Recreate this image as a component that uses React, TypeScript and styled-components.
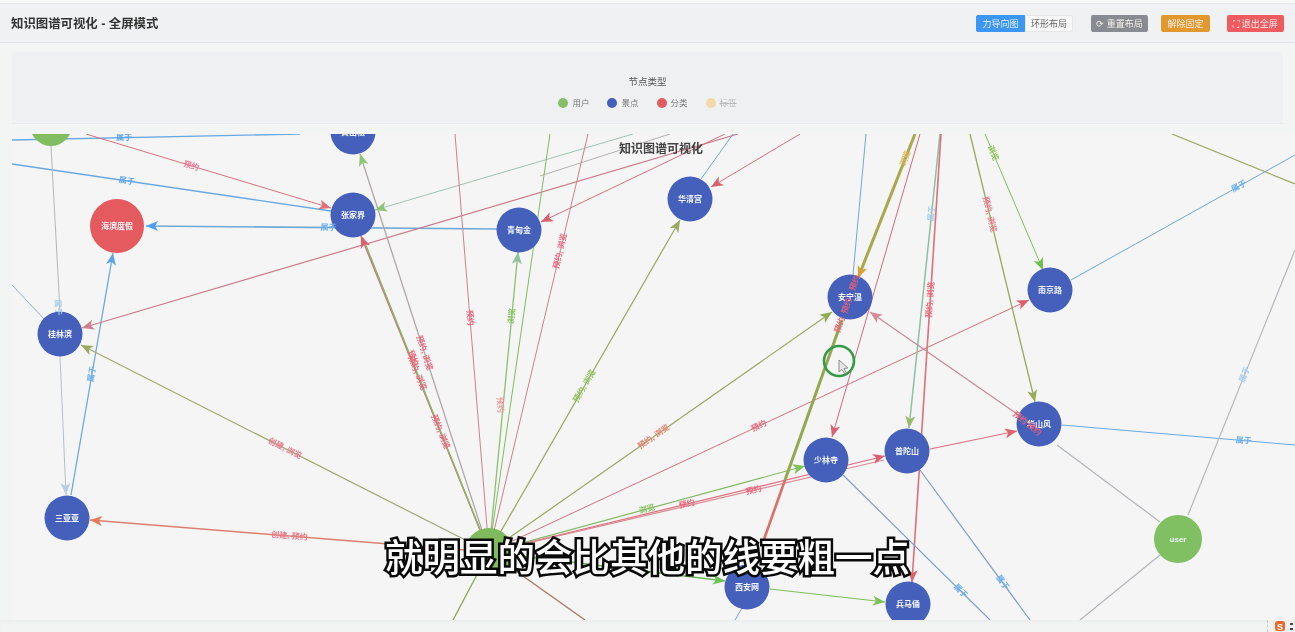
import styled, { createGlobalStyle } from 'styled-components'

const GlobalStyle = createGlobalStyle`
  html, body { margin: 0; padding: 0; background: #f4f5f5; }
  body { font-family: "Liberation Sans", "Noto Sans CJK SC", sans-serif; }
`

const Page = styled.div`
  position: relative;
  width: 100%;
  height: 632px;
  display: flex;
  flex-direction: column;
  overflow: hidden;
  background: #f4f5f5;
`

const Blurred = styled.div`
  display: flex;
  flex-direction: column;
  flex: 1;
  min-height: 0;
  filter: blur(0.5px);
`

const TopStrip = styled.div`
  height: 4px;
  background: #f7f8f8;
  border-bottom: 1px solid #e9eaeb;
  box-sizing: border-box;
`

const Header = styled.header`
  height: 39px;
  box-sizing: border-box;
  display: flex;
  align-items: center;
  padding: 0 11px;
  background: #f0f1f2;
  border-bottom: 1px solid #e4e5e6;
`

const Title = styled.h1`
  flex: 1;
  margin: 0;
  font-size: 12.4px;
  font-weight: 700;
  color: #333;
`

const Toolbar = styled.div`
  display: flex;
  align-items: center;
`

const SegmentGroup = styled.div`
  display: flex;
  margin-right: 18px;
`

const Segment = styled.div<{ $active?: boolean }>`
  width: ${p => (p.$active ? '49px' : '48px')};
  height: 17px;
  box-sizing: border-box;
  display: flex;
  align-items: center;
  justify-content: center;
  font-size: 9px;
  color: ${p => (p.$active ? '#e8f3ff' : '#666')};
  background: ${p => (p.$active ? '#3c96f3' : '#f8f8f8')};
  border: 1px solid ${p => (p.$active ? '#3c96f3' : '#e6e7e8')};
  border-radius: ${p => (p.$active ? '2px 0 0 2px' : '0 2px 2px 0')};
`

const ActionButton = styled.div<{ $color: string; $width: number; $gap: number }>`
  width: ${p => p.$width}px;
  height: 17px;
  margin-right: ${p => p.$gap}px;
  display: flex;
  align-items: center;
  justify-content: center;
  gap: 2px;
  font-size: 9px;
  color: #f4f0ea;
  background: ${p => p.$color};
  border-radius: 2px;
`

const Main = styled.main`
  flex: 1;
  min-height: 0;
  display: flex;
  flex-direction: column;
  gap: 10px;
  padding: 9px 0 0 12px;
  background: #f3f4f4;
`

const LegendCard = styled.section`
  height: 72px;
  box-sizing: border-box;
  margin-right: 12px;
  padding-top: 24px;
  display: flex;
  flex-direction: column;
  align-items: center;
  gap: 9px;
  background: #eff0f1;
  border-bottom: 1px solid #e8e9ea;
  border-radius: 3px 3px 0 0;
`

const LegendTitle = styled.div`
  font-size: 9.5px;
  line-height: 12px;
  color: #555;
`

const LegendRow = styled.div`
  display: flex;
  gap: 18px;
`

const LegendItem = styled.div<{ $off?: boolean }>`
  display: flex;
  align-items: center;
  gap: 4px;
  font-size: 8.5px;
  line-height: 12px;
  color: ${p => (p.$off ? '#bbb' : '#777')};
  text-decoration: ${p => (p.$off ? 'line-through' : 'none')};
`

const Dot = styled.span<{ $color: string }>`
  width: 10px;
  height: 10px;
  border-radius: 50%;
  background: ${p => p.$color};
`

const GraphSvg = styled.svg`
  display: block;
  width: 1283px;
  height: 486px;
  background: #f5f5f5;
`

const Footer = styled.footer`
  height: 12px;
  display: flex;
  align-items: center;
  justify-content: flex-end;
  gap: 4px;
  padding-right: 1px;
  background: #f2f3f3;
  box-shadow: inset 0 2px 2px #ebecec;
`

const TrayDivider = styled.span`
  height: 12px;
  margin-right: 2px;
  border-left: 1px dashed #ccc;
`

const Subtitle = styled.div`
  position: absolute;
  left: 0;
  right: 0;
  top: 532px;
  text-align: center;
  font-family: "Noto Sans CJK SC", sans-serif;
  font-size: 37.5px;
  font-weight: 500;
  line-height: 46px;
  color: #fff;
  -webkit-text-stroke: 5px #0a0a0a;
  paint-order: stroke fill;
  filter: blur(0.4px);
`

type Edge = {
  x1: number
  y1: number
  x2: number
  y2: number
  color: string
  width?: number
  arrow?: string
  label?: string
  labelColor?: string
  at?: number
}

type FreeLabel = { x: number; y: number; angle: number; text: string; color: string }

const BLUE = '#6aa9e0'
const RED = '#d9707f'
const GREEN = '#7fbd5f'
const OLIVE = '#9aa860'
const GREY = '#b3b6bb'
const HUB = { x: 489, y: 552 }

const hubEdge = (x2: number, y2: number, color: string, extra: Partial<Edge> = {}): Edge => ({
  x1: HUB.x,
  y1: HUB.y,
  x2,
  y2,
  color,
  ...extra
})

const edges: Edge[] = [
  { x1: 12, y1: 140, x2: 300, y2: 134, color: BLUE, width: 1.3, label: '属于', at: 0.39, labelColor: '#5ea6ea' },
  { x1: 12, y1: 164, x2: 331, y2: 211, color: BLUE, width: 1.3, label: '属于', at: 0.36, labelColor: '#5ea6ea' },
  { x1: 86, y1: 134, x2: 331, y2: 208, color: RED, arrow: '#e0707a', label: '预约', at: 0.43, labelColor: '#ec7a92' },
  { x1: 497, y1: 229, x2: 146, y2: 226, color: '#6fa9d6', width: 1.6, arrow: '#4d9ef0', label: '属于', at: 0.48, labelColor: '#6aaeea' },
  { x1: 51, y1: 146, x2: 60, y2: 312, color: GREY },
  { x1: 12, y1: 285, x2: 45, y2: 320, color: '#8fb2de' },
  { x1: 60, y1: 356, x2: 66, y2: 495, color: '#b4c0cc', arrow: '#b7cfe6', label: '属于', at: -0.35, labelColor: '#a8cdf0' },
  { x1: 71, y1: 495, x2: 113, y2: 253, color: BLUE, width: 1.3, arrow: '#5ba5e6', label: '属于', at: 0.5, labelColor: '#6aaeea' },
  { x1: 738, y1: 134, x2: 82, y2: 328, color: '#cc7a8c', width: 1.2, arrow: '#cf7f8f' },
  { x1: 633, y1: 134, x2: 375, y2: 210, color: '#9fc4b0', arrow: '#8fc474' },
  { x1: 670, y1: 134, x2: 540, y2: 176, color: '#b8b0b0' },
  { x1: 725, y1: 134, x2: 541, y2: 222, color: RED, arrow: '#d9606e' },
  { x1: 800, y1: 134, x2: 711, y2: 187, color: RED, arrow: '#d9606e' },
  { x1: 733, y1: 134, x2: 701, y2: 179, color: BLUE },
  hubEdge(361, 236, RED, { width: 1.6, arrow: '#d9606e', label: '预约, 浏览', at: 0.38, labelColor: '#e8687c' }),
  hubEdge(363, 238, GREEN, { width: 1.3, label: '预约, 浏览', at: 0.57, labelColor: '#e8687c' }),
  hubEdge(360, 154, '#b0a8a8', { width: 1.3, arrow: '#8fc474', label: '预约, 浏览', at: 0.5, labelColor: '#e8687c' }),
  hubEdge(455, 134, '#cf7f8c', { label: '预约', at: 0.56, labelColor: '#e8687c' }),
  hubEdge(550, 134, GREEN),
  hubEdge(588, 134, '#cf7f8c', { label: '预约, 浏览', at: 0.72, labelColor: '#e8687c' }),
  hubEdge(518, 252, '#8cbf72', { width: 1.3, arrow: '#8fc1a0', label: '浏览', at: 0.787, labelColor: '#86c25c' }),
  hubEdge(680, 220, OLIVE, { width: 1.2, arrow: '#9aa860', label: '预约, 浏览', at: 0.5, labelColor: '#90c05c' }),
  hubEdge(832, 312, OLIVE, { width: 1.2, arrow: '#8fae50', label: '预约, 浏览', at: 0.48, labelColor: '#e2806c' }),
  hubEdge(1029, 300, '#d9707f', { arrow: '#dc5f6b', label: '预约', at: 0.5, labelColor: '#e8687c' }),
  hubEdge(805, 466, '#82b865', { width: 1.2, arrow: '#7cc05a', label: '浏览', at: 0.5, labelColor: '#86c25c' }),
  hubEdge(885, 456, '#d9707f', { width: 1.2, arrow: '#d9606e', label: '预约', at: 0.5, labelColor: '#e8687c' }),
  hubEdge(884, 460, '#de8a92', { width: 1.2, label: '预约', at: 0.67, labelColor: '#e8687c' }),
  hubEdge(725, 581, '#72b85c', { width: 1.6, arrow: '#6cbf50' }),
  hubEdge(81, 345, '#a5a870', { width: 1.2, arrow: '#9aa860', label: '创建, 浏览', at: 0.5, labelColor: '#e87a8c' }),
  hubEdge(90, 520, '#d98070', { width: 1.3, arrow: '#e57a55', label: '创建, 预约', at: 0.5, labelColor: '#e87a8c' }),
  hubEdge(453, 620, '#86a850', { width: 1.3 }),
  hubEdge(585, 620, '#a9775c', { width: 1.3 }),
  { x1: 915, y1: 134, x2: 858, y2: 278, color: '#a8a84c', width: 3, arrow: '#d8a038', label: '浏览', at: 0.17, labelColor: '#e0b45c' },
  { x1: 842, y1: 320, x2: 785, y2: 480, color: '#94a850', width: 3 },
  { x1: 785, y1: 480, x2: 762, y2: 545, color: '#d9706a', width: 2.6 },
  { x1: 866, y1: 134, x2: 853, y2: 275, color: BLUE },
  { x1: 920, y1: 134, x2: 832, y2: 437, color: '#cc6c82', arrow: '#e05f6c' },
  { x1: 940, y1: 134, x2: 909, y2: 428, color: '#8cc0a0', width: 1.5, arrow: '#94bc6c', label: '属于', at: 0.27, labelColor: '#a8cdf0' },
  { x1: 941, y1: 134, x2: 912, y2: 582, color: '#e07078', width: 1.6, arrow: '#e0606c', label: '预约, 浏览', at: 0.37, labelColor: '#ec6a7a' },
  { x1: 970, y1: 134, x2: 1035, y2: 402, color: '#96a85c', width: 1.3, arrow: '#94ac54', label: '预约, 浏览', at: 0.3, labelColor: '#e87a8c' },
  { x1: 985, y1: 134, x2: 1043, y2: 270, color: '#7cc05a', arrow: '#6cbf4c', label: '浏览', at: 0.14, labelColor: '#90c05c' },
  { x1: 1295, y1: 155, x2: 1071, y2: 280, color: BLUE, label: '属于', at: 0.25, labelColor: '#6aaeea' },
  { x1: 1172, y1: 134, x2: 1295, y2: 184, color: '#9aa860', width: 1.2 },
  { x1: 1020, y1: 416, x2: 870, y2: 312, color: '#c98c98', width: 1.3, arrow: '#d88a96' },
  { x1: 1057, y1: 445, x2: 1160, y2: 522, color: GREY, width: 1.2 },
  { x1: 930, y1: 449, x2: 1017, y2: 431, color: '#d9707f', width: 1.2, arrow: '#e0606c' },
  { x1: 1062, y1: 425, x2: 1295, y2: 445, color: BLUE, label: '属于', at: 0.78, labelColor: '#6aaeea' },
  { x1: 1188, y1: 515, x2: 1295, y2: 250, color: GREY, width: 1.2, label: '属于', at: 0.53, labelColor: '#a8cdf0' },
  { x1: 1160, y1: 555, x2: 1080, y2: 620, color: GREY, width: 1.2 },
  { x1: 843, y1: 475, x2: 990, y2: 620, color: '#7f9fd0', width: 1.2, label: '属于', at: 0.8, labelColor: '#6aaeea' },
  { x1: 920, y1: 470, x2: 1030, y2: 620, color: '#7f9fd0', width: 1.2, label: '属于', at: 0.75, labelColor: '#6aaeea' },
  { x1: 770, y1: 589, x2: 885, y2: 602, color: '#7cc05a', arrow: '#7cc05a' },
  { x1: 742, y1: 608, x2: 735, y2: 620, color: '#7f9fd0' }
]

// labels that sit on top of the nodes or pile up on the bundled lines
const freeLabels: FreeLabel[] = [
  { x: 855, y: 283, angle: -70, text: '预约', color: '#e0607c' },
  { x: 847, y: 306, angle: -70, text: '预约', color: '#e0607c' },
  { x: 840, y: 325, angle: -70, text: '预约', color: '#e8687c' },
  { x: 1020, y: 418, angle: 38, text: '预约', color: '#e8687c' },
  { x: 1034, y: 429, angle: 38, text: '预约', color: '#e0607c' },
  { x: 500, y: 405, angle: 86, text: '预约', color: '#e89a9a' },
  { x: 413, y: 358, angle: 68, text: '预约', color: '#e8687c' }
]

type GraphNode = { x: number; y: number; name: string; fill?: string; r?: number }

const nodes: GraphNode[] = [
  { x: 51, y: 125, name: '', fill: '#83bd62', r: 21 },
  { x: 353, y: 132, name: '黄山松' },
  { x: 353, y: 215, name: '张家界' },
  { x: 519, y: 230, name: '青甸金' },
  { x: 690, y: 199, name: '华清宫' },
  { x: 850, y: 297, name: '安宁温' },
  { x: 1050, y: 290, name: '南京路' },
  { x: 60, y: 334, name: '桂林滨' },
  { x: 117, y: 226, name: '海滨度假', fill: '#e45a5f', r: 27 },
  { x: 67, y: 518, name: '三亚亚' },
  { x: 826, y: 460, name: '少林寺' },
  { x: 907, y: 451, name: '普陀山' },
  { x: 1039, y: 424, name: '华山风' },
  { x: 747, y: 587, name: '西安网' },
  { x: 908, y: 604, name: '兵马俑' },
  { x: 489, y: 552, name: '', fill: '#7fbb5d', r: 24 },
  { x: 1178, y: 539, name: 'user', fill: '#80bf62', r: 24 }
]

function Arrow({ edge }: { edge: Edge }) {
  const angle = (Math.atan2(edge.y2 - edge.y1, edge.x2 - edge.x1) * 180) / Math.PI
  return (
    <polygon
      points="0,0 -12,-5 -9,0 -12,5"
      fill={edge.arrow}
      transform={`translate(${edge.x2} ${edge.y2}) rotate(${angle})`}
    />
  )
}

function LabelText({ x, y, angle, text, color }: FreeLabel) {
  return (
    <text
      x={x}
      y={y + 2.5}
      fontSize="8"
      fontWeight="700"
      textAnchor="middle"
      fill={color}
      transform={`rotate(${angle} ${x} ${y})`}
    >
      {text}
    </text>
  )
}

function EdgeLabel({ edge }: { edge: Edge }) {
  const t = edge.at ?? 0.5
  const x = edge.x1 + (edge.x2 - edge.x1) * t
  const y = edge.y1 + (edge.y2 - edge.y1) * t
  let angle = (Math.atan2(edge.y2 - edge.y1, edge.x2 - edge.x1) * 180) / Math.PI
  if (angle > 90) angle -= 180
  if (angle < -90) angle += 180
  return <LabelText x={x} y={y} angle={angle} text={edge.label ?? ''} color={edge.labelColor ?? '#999'} />
}

function Graph() {
  return (
    <GraphSvg viewBox="12 134 1283 486">
      {edges.map((e, i) => (
        <line key={i} x1={e.x1} y1={e.y1} x2={e.x2} y2={e.y2} stroke={e.color} strokeWidth={e.width ?? 1} />
      ))}
      {edges.filter(e => e.arrow).map((e, i) => (
        <Arrow key={i} edge={e} />
      ))}
      {nodes.map(n => (
        <g key={`${n.x}-${n.y}`}>
          <circle cx={n.x} cy={n.y} r={n.r ?? 22.5} fill={n.fill ?? '#4560bb'} />
          <text x={n.x} y={n.y + 3} fontSize="8" fontWeight="700" textAnchor="middle" fill="#f2f4fa">
            {n.name}
          </text>
        </g>
      ))}
      {edges.filter(e => e.label).map((e, i) => (
        <EdgeLabel key={i} edge={e} />
      ))}
      {freeLabels.map((l, i) => (
        <LabelText key={i} {...l} />
      ))}
      <text x="661" y="153" fontSize="12" fontWeight="700" textAnchor="middle" fill="#444">
        知识图谱可视化
      </text>
      <circle cx="839" cy="361" r="15" fill="none" stroke="#349a45" strokeWidth="2.6" />
      <path d="M839 360 L839 372 L842 369.5 L845 374 L846.5 373 L844 368.5 L848 368 Z" fill="#e6e6e6" stroke="#777" strokeWidth="0.8" />
    </GraphSvg>
  )
}

export default function App() {
  return (
    <Page>
      <GlobalStyle />
      <Blurred>
        <TopStrip />
        <Header>
          <Title>知识图谱可视化 - 全屏模式</Title>
          <Toolbar>
            <SegmentGroup>
              <Segment $active>力导向图</Segment>
              <Segment>环形布局</Segment>
            </SegmentGroup>
            <ActionButton $color="#888b91" $width={57} $gap={13}>⟳ 重置布局</ActionButton>
            <ActionButton $color="#e0982f" $width={49} $gap={17}>解除固定</ActionButton>
            <ActionButton $color="#ee5b60" $width={57} $gap={0}>⛶ 退出全屏</ActionButton>
          </Toolbar>
        </Header>
        <Main>
          <LegendCard>
            <LegendTitle>节点类型</LegendTitle>
            <LegendRow>
              <LegendItem><Dot $color="#86bf68" />用户</LegendItem>
              <LegendItem><Dot $color="#4560bb" />景点</LegendItem>
              <LegendItem><Dot $color="#e45a5f" />分类</LegendItem>
              <LegendItem $off><Dot $color="#f3d9a8" />标签</LegendItem>
            </LegendRow>
          </LegendCard>
          <Graph />
        </Main>
        <Footer>
          <TrayDivider />
          <svg width="12" height="12" viewBox="0 0 12 12">
            <rect x="1" y="1" width="10" height="10" rx="2.5" fill="#ee6a2c" />
            <text x="6" y="9.5" fontSize="9" fontWeight="700" textAnchor="middle" fill="#fff">S</text>
          </svg>
          <svg width="4" height="12" viewBox="0 0 4 12">
            <rect x="0" y="3" width="3" height="2" fill="#444" />
            <rect x="0" y="8" width="3" height="2" fill="#444" />
          </svg>
        </Footer>
      </Blurred>
      <Subtitle>就明显的会比其他的线要粗一点</Subtitle>
    </Page>
  )
}
